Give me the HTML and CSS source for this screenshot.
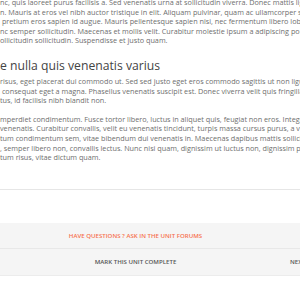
FILE: index.html
```html
<!DOCTYPE html>
<html>
<head>
<meta charset="utf-8">
<link rel="stylesheet" href="styles.css">
</head>
<body>
<div class="unit">
  <div class="unit-content">
    <p class="para">
      <span class="line">nc, quis laoreet purus facilisis a. Sed venenatis urna at sollicitudin viverra. Donec mattis ligula</span>
      <span class="line">n. Mauris at eros vel nibh auctor tristique in elit. Aliquam pulvinar, quam ac ullamcorper semper</span>
      <span class="line">&nbsp;pretium eros sapien id augue. Mauris pellentesque sapien nisi, nec fermentum libero lobortis</span>
      <span class="line">nc semper sollicitudin. Maecenas et mollis velit. Curabitur molestie ipsum a adipiscing porttitor</span>
      <span class="line">ollicitudin sollicitudin. Suspendisse et justo quam.</span>
    </p>
    <h3 class="heading">e nulla quis venenatis varius</h3>
    <p class="para">
      <span class="line">risus, eget placerat dui commodo ut. Sed sed justo eget eros commodo sagittis ut non ligula</span>
      <span class="line">&nbsp;consequat eget a magna. Phasellus venenatis suscipit est. Donec viverra velit quis fringilla fermentum</span>
      <span class="line">tus, id facilisis nibh blandit non.</span>
    </p>
    <p class="para">
      <span class="line">mperdiet condimentum. Fusce tortor libero, luctus in aliquet quis, feugiat non eros. Integer</span>
      <span class="line">venenatis. Curabitur convallis, velit eu venenatis tincidunt, turpis massa cursus purus, a venenatis</span>
      <span class="line">tum condimentum sem, vitae bibendum dui venenatis in. Maecenas dapibus mattis sollicitudin</span>
      <span class="line">, semper libero non, convallis lectus. Nunc nisi quam, dignissim ut luctus non, dignissim pellentesque</span>
      <span class="line">tum risus, vitae dictum quam.</span>
    </p>
  </div>
  <div class="unit-footer">
    <div class="forum-row">
      <a class="forum-link">HAVE QUESTIONS ? ASK IN THE UNIT FORUMS</a>
    </div>
    <div class="actions">
      <a class="action prev">PREVIOUS UNIT</a>
      <a class="action complete">MARK THIS UNIT COMPLETE</a>
      <a class="action next">NEXT UNIT</a>
    </div>
  </div>
</div>
</body>
</html>
```
FILE: styles.css
```css
html, body {
  margin: 0;
  padding: 0;
  background: #fff;
  overflow: hidden;
}
body {
  font-family: "Open Sans", "Noto Sans", sans-serif;
  width: 300px;
  height: 300px;
}
.unit {
  display: grid;
  grid-template-rows: 192px 33px auto;
  margin-top: -2px;
}
.unit-content {
  border-bottom: 1px solid #e6e6e6;
  overflow: hidden;
}
.para {
  margin: 0 0 9px 0;
  font-size: 7.25px;
  line-height: 9.6px;
  color: #6e6e6e;
}
.line {
  display: block;
  white-space: nowrap;
  overflow: hidden;
}
.heading {
  margin: 12px 0 3px 0;
  font-size: 12.2px;
  line-height: 16px;
  font-weight: 400;
  color: #444;
  white-space: nowrap;
}
.unit-footer {
  grid-row: 3;
  margin-left: -268px;
  width: 807px;
  background: #f5f5f5;
  font-size: 6.1px;
  font-weight: 600;
  text-transform: uppercase;
}
.forum-row {
  text-align: center;
  height: 25px;
  line-height: 25px;
  border-bottom: 1px solid #e8e8e8;
}
.forum-link {
  color: #f5714f;
}
.actions {
  display: grid;
  grid-template-columns: repeat(3, 1fr);
  height: 26px;
  line-height: 26px;
  color: #555;
  border-bottom: 1px solid #ececec;
}
.complete {
  text-align: center;
}
.next {
  padding-left: 20px;
}
.prev {
  text-align: left;
}
```
